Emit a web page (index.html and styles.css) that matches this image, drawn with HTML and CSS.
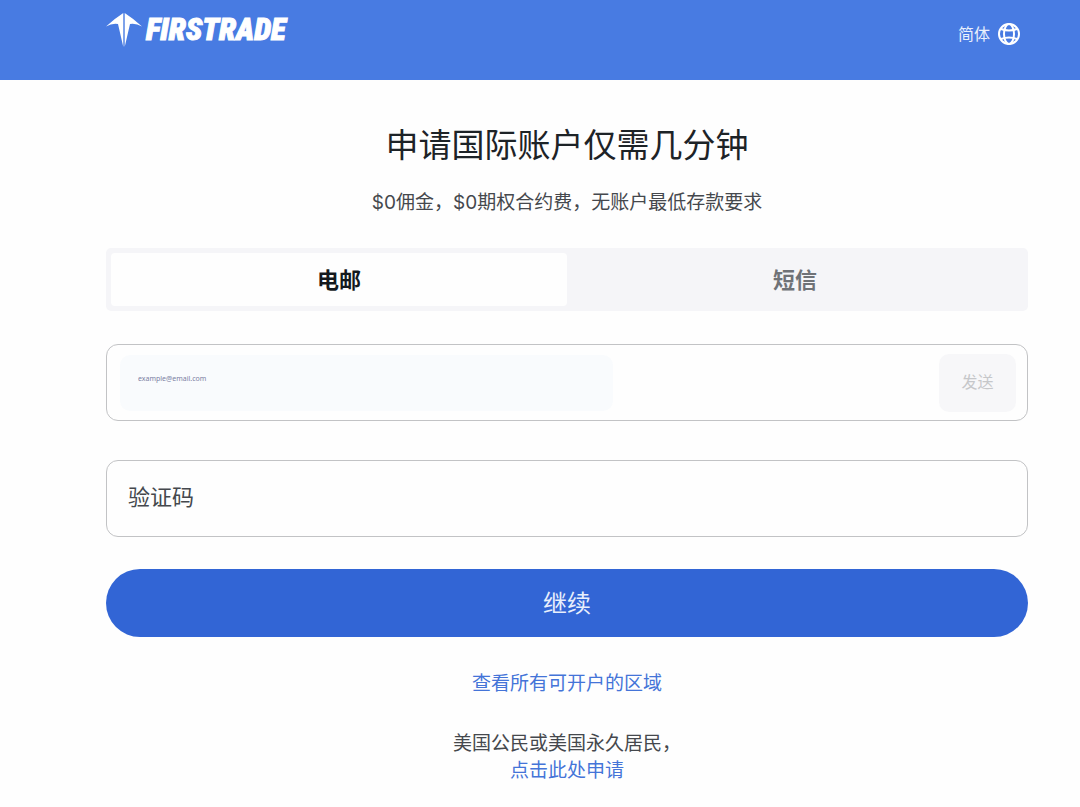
FILE: index.html
```html
<!DOCTYPE html>
<html lang="zh-CN">
<head>
    <meta charset="UTF-8">
    <meta name="viewport" content="width=device-width, initial-scale=1">
    <title>申请国际账户 - Firstrade</title>
    <link rel="stylesheet" href="styles.css">
</head>
<body>
    <header class="header">
        <a href="#" class="logo" aria-label="Firstrade">
            <svg class="logo-mark" viewBox="0 0 36 36" aria-hidden="true">
                <path d="M17.3 1 V35 L12 12 Q6 11 0 14.5 Q8 7 17.3 1 Z"/>
                <path d="M18.7 1 V35 L24 12 Q30 11 36 14.5 Q28 7 18.7 1 Z"/>
            </svg>
            <span class="logo-text">FIRSTRADE</span>
        </a>
        <button type="button" class="lang">
            简体
            <svg class="globe" viewBox="0 0 24 24" aria-hidden="true">
                <circle cx="12" cy="12" r="10"/>
                <ellipse cx="12" cy="12" rx="5" ry="10"/>
                <path d="M4 7 Q12 10 20 7 M4 17 Q12 14 20 17"/>
            </svg>
        </button>
    </header>

    <main class="container">
        <h1>申请国际账户仅需几分钟</h1>
        <p class="subtitle">$0佣金，$0期权合约费，无账户最低存款要求</p>

        <!-- 验证方式 -->
        <div class="tabs" role="tablist">
            <button type="button" class="tab active" role="tab" aria-selected="true">电邮</button>
            <button type="button" class="tab" role="tab" aria-selected="false">短信</button>
        </div>

        <form>
            <div class="field">
                <input type="email" class="email" placeholder="example@email.com" aria-label="电邮">
                <button type="button" class="send" disabled>发送</button>
            </div>
            <div class="field">
                <input type="text" class="code" placeholder="验证码" aria-label="验证码">
            </div>
            <button type="submit" class="submit">继续</button>
        </form>

        <!-- 底部链接 -->
        <p class="regions"><a href="#">查看所有可开户的区域</a></p>
        <p class="citizen">美国公民或美国永久居民，<br><a href="#">点击此处申请</a></p>
    </main>
</body>
</html>
```
FILE: styles.css
```css
* {
    box-sizing: border-box;
}

body {
    margin: 0;
    background: #fefefe;
    color: #45484d;
    font-family: Inter, "Noto Sans CJK SC", sans-serif;
    font-size: 19px;
    line-height: 27px;
}

button,
input {
    font-family: inherit;
    border: 0;
    padding: 0;
}

button {
    cursor: pointer;
}

a {
    color: #4474d8;
    text-decoration: none;
}

.header {
    display: flex;
    justify-content: space-between;
    align-items: flex-start;
    height: 80px;
    padding: 12px 59px 0 106px;
    background: #487be2;
}

.logo {
    display: flex;
    align-items: center;
    gap: 4px;
    color: #fff;
}

.logo-mark {
    width: 36px;
    height: 36px;
    fill: #fff;
}

.logo-text {
    font-family: "Roboto Condensed", "Open Sans Condensed", "Noto Sans ExtraCondensed", "Noto Sans Condensed", "Liberation Sans", sans-serif;
    font-size: 31px;
    font-weight: 900;
    font-style: italic;
    line-height: 36px;
    -webkit-text-stroke: 1px #fff;
}

.lang {
    display: flex;
    align-items: center;
    gap: 7px;
    padding-top: 10px;
    background: none;
    color: #e8effc;
    font-size: 16px;
    line-height: 24px;
}

.globe {
    width: 24px;
    height: 24px;
    fill: none;
    stroke: #fff;
    stroke-width: 2;
}

.container {
    padding: 41px 52px 20px 106px;
    text-align: center;
}

h1 {
    margin: 0 0 20px;
    color: #1d2327;
    font-size: 33px;
    font-weight: 400;
    line-height: 48px;
}

.subtitle {
    margin: 0 0 32px;
}

.tabs {
    display: flex;
    padding: 5px;
    margin-bottom: 33px;
    border-radius: 5px;
    background: #f5f5f8;
}

.tab {
    flex: 1;
    height: 53px;
    padding-bottom: 3px;
    border-radius: 4px;
    background: none;
    color: #6f7277;
    font-size: 22px;
    font-weight: 700;
}

.tab.active {
    background: #fefefe;
    color: #14191d;
}

.field {
    display: flex;
    align-items: center;
    justify-content: space-between;
    height: 77px;
    margin-bottom: 39px;
    padding: 0 11px 0 13px;
    border: 1px solid #c2c3c5;
    border-radius: 12px;
}

.field:last-of-type {
    margin-bottom: 32px;
}

.email {
    width: 55%;
    height: 56px;
    padding: 0 18px 8px;
    border-radius: 10px;
    background: #f9fbfd;
    font-family: "Noto Sans", sans-serif;
    font-size: 7px;
}

.email::placeholder {
    color: #7c80a3;
}

.send {
    width: 77px;
    height: 58px;
    padding-bottom: 3px;
    border-radius: 10px;
    background: #f7f7f9;
    color: #c6c7ca;
    font-size: 16px;
}

.code {
    flex: 1;
    height: 56px;
    padding: 0 8px 3px;
    background: none;
    font-size: 22px;
}

.code::placeholder {
    color: #45484d;
}

.submit {
    width: 100%;
    height: 68px;
    padding-bottom: 3px;
    border-radius: 34px;
    background: #3265d5;
    color: #e8effc;
    font-size: 24px;
}

.regions {
    margin: 33px 0;
}

.citizen {
    margin: 0;
}
```
